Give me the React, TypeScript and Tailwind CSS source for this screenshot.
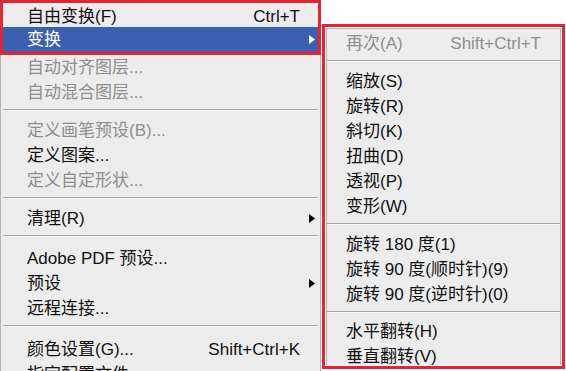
import React from 'react';

type Item =
  | { sep: true; h?: number }
  | { label: string; shortcut?: string; disabled?: boolean; arrow?: boolean; active?: boolean };

const font = { fontFamily: '"Liberation Sans", "Noto Sans CJK SC", sans-serif' };

const Arrow: React.FC<{ white?: boolean }> = ({ white }) => (
  <svg width="6" height="9" viewBox="0 0 6 9">
    <path d="M0 0 L6 4.5 L0 9 Z" fill={white ? '#ffffff' : '#000000'} />
  </svg>
);

const Row: React.FC<{ item: Extract<Item, { label: string }>; pl: string; right: 'left' | 'right' }> = ({ item, pl, right }) => {
  const color = item.active ? 'text-white bg-[#3d5faf]' : item.disabled ? 'text-[#8e8e8e]' : 'text-[#111111]';
  return (
    <div className={`shrink-0 flex items-center h-[25px] text-[17px] leading-none whitespace-nowrap ${pl} ${color}`}>
      <span className="flex-1">{item.label}</span>
      {item.shortcut && <span>{item.shortcut}</span>}
      {right === 'left' ? (
        <span className="w-[18px] flex justify-end pr-[3px]">{item.arrow && <Arrow white={item.active} />}</span>
      ) : (
        <span className="w-[19px]" />
      )}
    </div>
  );
};

const Sep: React.FC<{ h?: number }> = ({ h = 13 }) => (
  <div className="shrink-0 flex flex-col" style={{ height: h }}>
    <div className="mt-[4px] h-[2px] border-t border-t-[#a5a5a5] border-b border-b-[#fafafa]" />
  </div>
);

const leftItems: Item[] = [
  { label: '自动对齐图层...', disabled: true },
  { label: '自动混合图层...', disabled: true },
  { sep: true },
  { label: '定义画笔预设(B)...', disabled: true },
  { label: '定义图案...' },
  { label: '定义自定形状...', disabled: true },
  { sep: true },
  { label: '清理(R)', arrow: true },
  { sep: true, h: 15 },
  { label: 'Adobe PDF 预设...' },
  { label: '预设', arrow: true },
  { label: '远程连接...' },
  { sep: true, h: 16 },
  { label: '颜色设置(G)...', shortcut: 'Shift+Ctrl+K' },
  { label: '指定配置文件...' },
];

const rightItems: Item[] = [
  { label: '再次(A)', shortcut: 'Shift+Ctrl+T', disabled: true },
  { sep: true },
  { label: '缩放(S)' },
  { label: '旋转(R)' },
  { label: '斜切(K)' },
  { label: '扭曲(D)' },
  { label: '透视(P)' },
  { label: '变形(W)' },
  { sep: true },
  { label: '旋转 180 度(1)' },
  { label: '旋转 90 度(顺时针)(9)' },
  { label: '旋转 90 度(逆时针)(0)' },
  { sep: true, h: 12 },
  { label: '水平翻转(H)' },
  { label: '垂直翻转(V)' },
];

const render = (items: Item[], pl: string, side: 'left' | 'right') =>
  items.map((it, i) => ('sep' in it ? <Sep key={i} h={it.h} /> : <Row key={i} item={it} pl={pl} right={side} />));

export default function App() {
  return (
    <div className="w-[566px] h-[371px] overflow-hidden bg-white flex" style={font}>
      {/* main menu */}
      <div className="w-[321px] h-[371px] bg-[#ececec] flex flex-col overflow-hidden">
        <div className="shrink-0 border-[3px] border-[#e8232d]">
          <div className="h-[24px] flex items-center pl-[24px] text-[17px] leading-none text-[#111111] whitespace-nowrap pt-[2px]">
            <span className="flex-1">自由变换(F)</span>
            <span>Ctrl+T</span>
            <span className="w-[18px]" />
          </div>
          <Row item={{ label: '变换', arrow: true, active: true }} pl="pl-[24px]" right="left" />
        </div>
        <div className="flex-1 flex flex-col px-[2px] border-x border-[#b4b4b4]">
          {render(leftItems, 'pl-[24px]', 'left')}
        </div>
      </div>

      {/* submenu */}
      <div className="ml-[1px] w-[243px] flex flex-col">
        <div className="h-[24px] shrink-0" />
        <div className="h-[345px] shrink-0 border-[3px] border-[#e8232d] bg-white p-px overflow-hidden">
          <div className="h-full bg-[#ececec] border-t border-x border-[#b4b4b4] pt-[1.5px] flex flex-col">
            {render(rightItems, 'pl-[19px]', 'right')}
          </div>
        </div>
      </div>
    </div>
  );
}
